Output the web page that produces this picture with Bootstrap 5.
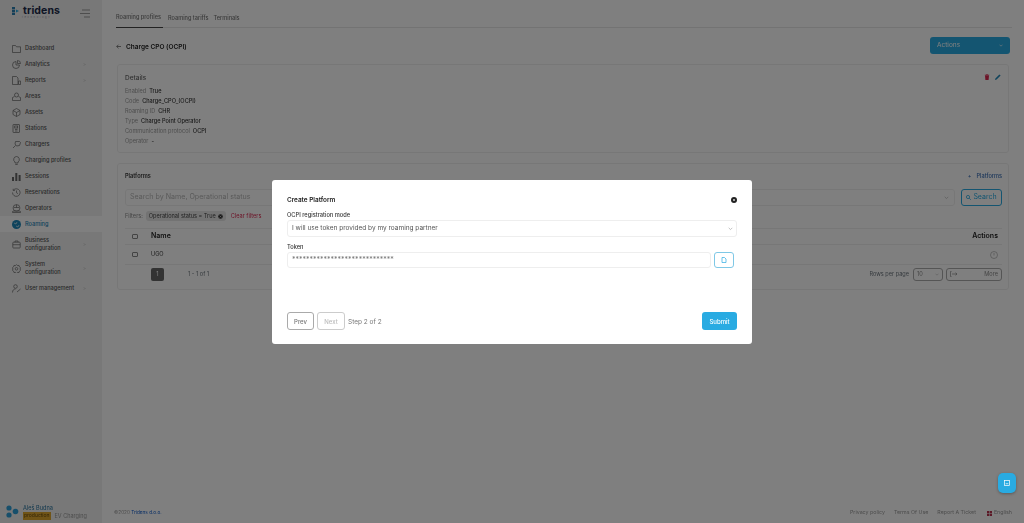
<!DOCTYPE html>
<html lang="en">
<head>
  <meta charset="UTF-8" />
  <meta name="viewport" content="width=device-width, initial-scale=1" />
  <title>Charge CPO (OCPI) - Tridens</title>
  <link href="https://cdn.jsdelivr.net/npm/bootstrap@5.3.3/dist/css/bootstrap.min.css" rel="stylesheet" />
  <style>
    html, body { height: 100%; overflow: hidden; }
    body { font-family: Inter, "Liberation Sans", sans-serif; font-size: 5.6px; color: #333; background: #fff; }
    body > * { filter: blur(.3px); }
    svg { display: block; flex: none; }

    /* sidebar */
    .side { width: 102px; height: 523px; background: #f0f0f0; flex: none; }
    .brand { height: 40px; padding: 6px 12px 0; }
    .brand-name { font-size: 10.5px; font-weight: 700; line-height: 10px; color: #1c2b4a; letter-spacing: .1px; }
    .brand-sub { font-size: 2.5px; letter-spacing: 1.6px; color: #99a; line-height: 4px; margin-left: 10px; }
    .burger { margin: 3px 0 0 auto; }
    .side-item { height: 16px; padding-left: 12px; padding-right: 16px; gap: 4px; color: #555; font-weight: 500; }
    .side-item.two-line { height: 24px; line-height: 8.5px; }
    .side-item.on { background: #fff; color: #1f86b8; }
    .caret-r { margin-left: auto; }
    .side-foot { margin-top: auto; padding: 0 0 3px 6px; gap: 4px; }
    .prod-tag { background: #e0a82e; color: #6b4d10; padding: 0 1px; font-size: 5px; }
    .side-name { color: #29749e; line-height: 8px; }
    .side-muted { color: #999; font-size: 5.5px; }

    /* main */
    .main-area { height: 523px; padding: 0 12px 0 14px; min-width: 0; }
    .tab-row { height: 28px; border-bottom: 1px solid #e7e7e7; gap: 5px; }
    .tab-link { padding-bottom: 6px; color: #777; height: 28px; display: flex; align-items: flex-end; font-weight: 500; white-space: nowrap; }
    .tab-link.on { border-bottom: 1px solid #444; width: 47px; }
    .title-row { height: 36px; gap: 5px; }
    .page-title { font-size: 6.5px; font-weight: 600; color: #222; line-height: 8px; margin-top: 1px; }
    .btn-actions { width: 80px; height: 17px; background: #29abe2; color: #fff; border-radius: 3px; padding: 0 7px; font-size: 6.5px; margin-right: 2px; margin-top: -1px; }
    .btn-actions span { margin-top: 1px; }
    .panel { border: 1px solid #efefef; border-radius: 3px; margin-left: 1px; margin-right: 3px; }
    .panel-details { height: 89px; padding: 7px 7px; }
    .panel-head { font-size: 6.5px; color: #666; font-weight: 500; line-height: 12px; }
    .panel-tools { gap: 5px; margin-top: 2px; }
    .detail-list { margin-top: 2px; }
    .detail-row { height: 10px; line-height: 10px; color: #999; gap: 3px; }
    .detail-row b { color: #333; font-weight: 500; }
    .panel-platforms { height: 127px; margin-top: 10px; padding: 6px 6px 0 7px; }
    .panel-sub { font-weight: 600; color: #333; line-height: 12px; }
    .link-plus { color: #3b6fb5; font-weight: 500; gap: 5px; }
    .search-row { margin-top: 7px; gap: 6px; }
    .search-box { height: 17px; border: 1px solid #efefef; border-radius: 3px; color: #b5b5b5; font-size: 7.1px; padding: 0 5px 0 4px; flex: 1; }
    .btn-find { width: 41px; height: 17px; border: 1px solid #29abe2; border-radius: 3px; color: #29abe2; font-size: 7px; gap: 2px; }
    .filter-row { height: 20px; gap: 3px; color: #888; }
    .filter-chip { background: #e6e6e6; border-radius: 3px; height: 10px; padding: 0 3px; color: #444; gap: 2px; }
    .clear-link { color: #d9274f; margin-left: 2px; }
    .grid-head { height: 17px; border-top: 1px solid #efefef; border-bottom: 1px solid #efefef; margin-top: 2px; }
    .grid-body { height: 20px; border-bottom: 1px solid #efefef; }
    .cell-check { width: 26px; padding-left: 7px; }
    .box-check { width: 5.5px; height: 5.5px; border: 1px solid #888; border-radius: 1px; }
    .col-head { font-size: 7px; font-weight: 600; color: #222; }
    .pager-row { height: 18px; }
    .page-num { width: 13px; height: 13px; background: #666; color: #fff; border-radius: 2px; margin-left: 26px; }
    .mini-select { height: 13px; border: 1px solid #aaa; border-radius: 3px; color: #888; padding: 0 3px; }
    .mini-rows { width: 30px; margin-right: 3px; }
    .mini-more { width: 56px; }
    .main-foot { margin-top: auto; height: 20px; color: #999; gap: 9px; margin-left: -2px; font-size: 5.3px; }
    .foot-copy { font-size: 4.7px; }
    .foot-lang { gap: 2px; margin-left: 2px; }

    /* fab */
    .fab { position: fixed; right: 8px; bottom: 30px; width: 18px; height: 20px; background: #29abe2; border-radius: 5px; z-index: 1060; box-shadow: 0 1px 3px rgba(0,0,0,.3); }

    /* modal */
    .modal-dialog.plat-dialog { width: 480px; max-width: 480px; margin: 180px 0 0 272px; }
    .plat-content { height: 164px; border: 0; border-radius: 3px; padding: 14px 15px 14px; font-size: 5.7px; }
    .plat-title { font-size: 6.4px; font-weight: 600; color: #222; line-height: 12px; }
    .close-dot { width: 6px; height: 6px; background: #222; border-radius: 50%; margin: 3px 0 0 0; color: #fff; }
    .plat-label { font-weight: 500; color: #333; height: 10px; line-height: 10px; margin-top: 4px; }
    .plat-label.next { margin-top: 5px; }
    .plat-input { height: 17px; border: 1px solid #eee; border-radius: 3px; color: #555; font-size: 6.5px; padding: 1px 3px 0 4px; }
    .plat-token { height: 16px; font-size: 7px; color: #777; flex: 1; }
    .plat-row { gap: 3px; margin-right: 3px; }
    .plat-copy { width: 20px; height: 16px; border: 1px solid #7fc8e6; border-radius: 3px; }
    .btn-step { height: 18px; width: 27px; border: 1px solid #aaa; border-radius: 3px; color: #777; font-size: 6px; font-weight: 500; background: #fff; margin-right: 3px; }
    .btn-step.off { border-color: #ccc; color: #bbb; width: 28px; }
    .step-text { color: #777; font-size: 6.5px; line-height: 8px; margin-top: 1px; }
    .btn-go { width: 35px; height: 18px; background: #29abe2; color: #fff; border-radius: 3px; font-size: 6px; font-weight: 500; }
    .modal-backdrop.show { opacity: .5; }
  </style>
</head>
<body>
  <div class="d-flex">
    <aside class="side d-flex flex-column">
      <div class="brand d-flex">
        <div>
          <div class="d-flex align-items-center gap-1">
            <svg width="7" height="8" viewBox="0 0 7 8"><rect x="0" y="0" width="3" height="2.4" fill="#2b7fb0"/><rect x="0" y="3" width="3" height="2.2" fill="#2b7fb0"/><rect x="0" y="5.7" width="3" height="2.3" fill="#2b7fb0"/><path d="M4 2.5l3 1.5-3 1.5z" fill="#29abe2"/></svg>
            <span class="brand-name">tridens</span>
          </div>
          <div class="brand-sub">technology</div>
        </div>
        <svg class="burger" width="10" height="9" viewBox="0 0 10 9" fill="none" stroke="#777" stroke-width=".7"><path d="M2 1h8M0 4.5h10M4 8h6"/></svg>
      </div>
      <div class="side-item d-flex align-items-center"><svg width="9" height="9" viewBox="0 0 9 9" fill="none" stroke="#666" stroke-width=".7"><path d="M.5 1.5h3l1 1.3h4v5.7H.5z"/></svg>Dashboard</div>
      <div class="side-item d-flex align-items-center"><svg width="9" height="9" viewBox="0 0 9 9" fill="none" stroke="#666" stroke-width=".7"><path d="M4 1.5a3.5 3.5 0 1 0 3.5 3.5H4zM5.5.5A3 3 0 0 1 8.5 3.5h-3z"/></svg>Analytics<svg class="caret-r" width="3" height="3" viewBox="0 0 3 3" fill="none" stroke="#999" stroke-width=".5"><path d="M1 .5l1 1-1 1"/></svg></div>
      <div class="side-item d-flex align-items-center"><svg width="9" height="9" viewBox="0 0 9 9" fill="none" stroke="#666" stroke-width=".7"><path d="M.5.5h4l1.5 1.5v6.5H.5zM6.5 5h2v3.5h-2z"/></svg>Reports<svg class="caret-r" width="3" height="3" viewBox="0 0 3 3" fill="none" stroke="#999" stroke-width=".5"><path d="M1 .5l1 1-1 1"/></svg></div>
      <div class="side-item d-flex align-items-center"><svg width="9" height="9" viewBox="0 0 9 9" fill="none" stroke="#666" stroke-width=".7"><circle cx="4.5" cy="3" r="2"/><path d="M.5 8.5v-3l2-1M8.5 8.5v-3l-2-1M.5 8.5h8"/></svg>Areas</div>
      <div class="side-item d-flex align-items-center"><svg width="9" height="9" viewBox="0 0 9 9" fill="none" stroke="#666" stroke-width=".7"><path d="M4.5.5l3.5 2v4l-3.5 2-3.5-2v-4zM1 2.5l3.5 2 3.5-2M4.5 4.5v4"/></svg>Assets</div>
      <div class="side-item d-flex align-items-center"><svg width="9" height="9" viewBox="0 0 9 9" fill="none" stroke="#666" stroke-width=".7"><rect x="1" y=".5" width="6.5" height="8" rx=".5"/><rect x="2.7" y="2" width="3" height="2"/><path d="M3 5.5h2.5M3 7h2.5"/></svg>Stations</div>
      <div class="side-item d-flex align-items-center"><svg width="9" height="9" viewBox="0 0 9 9" fill="none" stroke="#666" stroke-width=".7"><path d="M3.5 1.5l4 0 1 1-1 3-3 .5-1.5-2zM3.5 5.5l-2.5 2.5"/></svg>Chargers</div>
      <div class="side-item d-flex align-items-center"><svg width="9" height="9" viewBox="0 0 9 9" fill="none" stroke="#666" stroke-width=".7"><path d="M4.5.5a3 3 0 0 0-1.5 5.5v1h3V6A3 3 0 0 0 4.5.5zM3.3 8.5h2.4"/></svg>Charging profiles</div>
      <div class="side-item d-flex align-items-center"><svg width="9" height="9" viewBox="0 0 9 9" fill="#666"><rect x="0" y="5" width="2" height="4"/><rect x="3.3" y="1" width="2" height="8"/><rect x="6.6" y="3" width="2" height="6"/></svg>Sessions</div>
      <div class="side-item d-flex align-items-center"><svg width="9" height="9" viewBox="0 0 9 9" fill="none" stroke="#666" stroke-width=".7"><path d="M1.5 2a3.8 3.8 0 1 1-1 2.5M1.2.8V2.5h1.7M4.5 2.5v2.2l1.5 1"/></svg>Reservations</div>
      <div class="side-item d-flex align-items-center"><svg width="9" height="9" viewBox="0 0 9 9" fill="none" stroke="#666" stroke-width=".7"><circle cx="4.5" cy="4" r="3.4"/><path d="M2 3.5h5M4.5 .6v3M.5 7.5c1-1 7-1 8 0v1h-8z"/></svg>Operators</div>
      <div class="side-item on d-flex align-items-center"><svg width="9" height="9" viewBox="0 0 9 9"><circle cx="4.5" cy="4.5" r="4.5" fill="#1f86b8"/><path d="M2 3l2 1 1-2M4 6l2 1 1-2" fill="none" stroke="#fff" stroke-width=".6"/></svg>Roaming</div>
      <div class="side-item two-line d-flex align-items-center"><svg width="9" height="9" viewBox="0 0 9 9" fill="none" stroke="#666" stroke-width=".7"><rect x=".8" y="2.2" width="7.4" height="5.8" rx=".7"/><path d="M3 2.2V1h3v1.2M.8 4.7h7.4"/></svg><span>Business<br />configuration</span><svg class="caret-r" width="3" height="3" viewBox="0 0 3 3" fill="none" stroke="#999" stroke-width=".5"><path d="M1 .5l1 1-1 1"/></svg></div>
      <div class="side-item two-line d-flex align-items-center"><svg width="9" height="9" viewBox="0 0 9 9" fill="none" stroke="#666" stroke-width=".7"><path d="M4.5.6l1 1 1.5-.2.4 1.4 1.2.9-.6 1.3.6 1.3-1.2.9-.4 1.4-1.5-.2-1 1-1-1-1.5.2-.4-1.4L.4 6.3 1 5 .4 3.7l1.2-.9L2 1.4l1.5.2z"/><circle cx="4.5" cy="4.8" r="1.3"/></svg><span>System<br />configuration</span><svg class="caret-r" width="3" height="3" viewBox="0 0 3 3" fill="none" stroke="#999" stroke-width=".5"><path d="M1 .5l1 1-1 1"/></svg></div>
      <div class="side-item d-flex align-items-center"><svg width="9" height="9" viewBox="0 0 9 9" fill="none" stroke="#666" stroke-width=".7"><circle cx="3.5" cy="2.5" r="1.8"/><path d="M.5 8.5c0-2.5 1.5-3.5 3-3.5M5 8l3.5-3"/></svg>User management<svg class="caret-r" width="3" height="3" viewBox="0 0 3 3" fill="none" stroke="#999" stroke-width=".5"><path d="M1 .5l1 1-1 1"/></svg></div>
      <div class="side-foot d-flex align-items-center">
        <svg width="13" height="13" viewBox="0 0 13 13" fill="#2f9fd6"><circle cx="3" cy="3" r="2.6"/><circle cx="3" cy="10" r="2.6"/><circle cx="9.5" cy="6.5" r="2.8"/></svg>
        <div>
          <div class="side-name">Aleš Budna</div>
          <div class="d-flex align-items-center gap-1"><span class="prod-tag">production</span><span class="side-muted">EV Charging</span></div>
        </div>
      </div>
    </aside>

    <main class="main-area flex-grow-1 d-flex flex-column">
      <div class="tab-row d-flex">
        <span class="tab-link on">Roaming profiles</span>
        <span class="tab-link">Roaming tariffs</span>
        <span class="tab-link">Terminals</span>
      </div>
      <div class="title-row d-flex align-items-center">
        <svg width="5" height="5" viewBox="0 0 5 5" fill="none" stroke="#555" stroke-width=".7"><path d="M2.5.7L.7 2.5l1.8 1.8M.7 2.5H5"/></svg>
        <span class="page-title">Charge CPO (OCPI)</span>
        <div class="btn-actions d-flex align-items-center justify-content-between ms-auto"><span>Actions</span>
          <svg width="4" height="3" viewBox="0 0 4 3" fill="none" stroke="#fff" stroke-width=".6"><path d="M.5.7l1.5 1.5L3.5.7"/></svg>
        </div>
      </div>

      <section class="panel panel-details">
        <div class="d-flex justify-content-between">
          <div class="panel-head">Details</div>
          <div class="panel-tools d-flex">
            <svg width="6" height="6" viewBox="0 0 6 6" fill="#d9274f"><path d="M1 1.5h4L4.6 6H1.4zM.7.7h4.6v.5H.7zM2.2.2h1.6v.5H2.2z"/></svg>
            <svg width="6" height="6" viewBox="0 0 6 6" fill="#1f86b8"><path d="M0 6l.4-1.6L4.4.4l1.2 1.2-4 4z"/></svg>
          </div>
        </div>
        <div class="detail-list">
          <div class="detail-row d-flex">Enabled <b>True</b></div>
          <div class="detail-row d-flex">Code <b>Charge_CPO_(OCPI)</b></div>
          <div class="detail-row d-flex">Roaming ID <b>CHR</b></div>
          <div class="detail-row d-flex">Type <b>Charge Point Operator</b></div>
          <div class="detail-row d-flex">Communication protocol <b>OCPI</b></div>
          <div class="detail-row d-flex">Operator <b>-</b></div>
        </div>
      </section>

      <section class="panel panel-platforms">
        <div class="d-flex justify-content-between align-items-center">
          <div class="panel-sub">Platforms</div>
          <div class="link-plus d-flex"><span>+</span><span>Platforms</span></div>
        </div>
        <div class="search-row d-flex">
          <div class="search-box d-flex align-items-center justify-content-between">Search by Name, Operational status
            <svg width="5" height="4" viewBox="0 0 5 4" fill="none" stroke="#aaa" stroke-width=".6"><path d="M.7.8l1.8 1.8L4.3.8"/></svg>
          </div>
          <div class="btn-find d-flex align-items-center justify-content-center">
            <svg width="5" height="5" viewBox="0 0 5 5" fill="none" stroke="#29abe2" stroke-width=".8"><circle cx="2" cy="2" r="1.6"/><path d="M3.2 3.2L4.8 4.8"/></svg>Search
          </div>
        </div>
        <div class="filter-row d-flex align-items-center">Filters:
          <span class="filter-chip d-flex align-items-center">Operational status = True
            <svg width="5" height="5" viewBox="0 0 5 5"><circle cx="2.5" cy="2.5" r="2.3" fill="#333"/><path d="M1.6 1.6l1.8 1.8M3.4 1.6L1.6 3.4" stroke="#eee" stroke-width=".5"/></svg>
          </span>
          <span class="clear-link">Clear filters</span>
        </div>
        <div class="grid-head d-flex align-items-center">
          <div class="cell-check"><div class="box-check"></div></div>
          <div class="col-head">Name</div>
          <div class="col-head ms-auto pe-1">Actions</div>
        </div>
        <div class="grid-body d-flex align-items-center">
          <div class="cell-check"><div class="box-check"></div></div>
          <div>UGO</div>
          <svg class="ms-auto me-1" width="8" height="8" viewBox="0 0 8 8" fill="none" stroke="#999" stroke-width=".6"><circle cx="4" cy="4" r="3.5"/><path d="M4 2v2.5"/></svg>
        </div>
        <div class="pager-row d-flex align-items-center">
          <div class="page-num d-flex align-items-center justify-content-center">1</div>
          <span class="ms-4 text-secondary">1 - 1 of 1</span>
          <span class="ms-auto text-secondary me-1">Rows per page</span>
          <div class="mini-select mini-rows d-flex align-items-center justify-content-between">10
            <svg width="4" height="3" viewBox="0 0 4 3" fill="none" stroke="#aaa" stroke-width=".5"><path d="M.5.7l1.5 1.5L3.5.7"/></svg>
          </div>
          <div class="mini-select mini-more d-flex align-items-center justify-content-between">
            <svg width="7" height="6" viewBox="0 0 7 6" fill="none" stroke="#777" stroke-width=".6"><path d="M1.5.5H.5v5h1M2 3h5M5.5 1.7L7 3 5.5 4.3"/></svg>More
          </div>
        </div>
      </section>

      <footer class="main-foot d-flex align-items-center">
        <span class="foot-copy">©2020 <span class="text-primary-emphasis">Tridens d.o.o.</span></span>
        <span class="ms-auto">Privacy policy</span>
        <span>Terms Of Use</span>
        <span>Report A Ticket</span>
        <span class="foot-lang d-flex align-items-center"><svg width="5" height="5" viewBox="0 0 5 5"><rect width="5" height="5" fill="#b8324f"/><path d="M0 2.5h5M2.5 0v5" stroke="#eee" stroke-width=".6"/></svg>English</span>
      </footer>
    </main>
  </div>

  <div class="modal-backdrop show"></div>
  <div class="modal d-block" tabindex="-1">
    <div class="modal-dialog plat-dialog">
      <div class="modal-content plat-content">
        <div class="d-flex justify-content-between">
          <div class="plat-title">Create Platform</div>
          <div class="close-dot d-flex align-items-center justify-content-center">
            <svg width="4" height="4" viewBox="0 0 4 4" stroke="#fff" stroke-width=".6"><path d="M1 1l2 2M3 1L1 3"/></svg>
          </div>
        </div>
        <div class="plat-label">OCPI registration mode</div>
        <div class="plat-input d-flex align-items-center justify-content-between">I will use token provided by my roaming partner
          <svg width="5" height="4" viewBox="0 0 5 4" fill="none" stroke="#999" stroke-width=".6"><path d="M.7.8l1.8 1.8L4.3.8"/></svg>
        </div>
        <div class="plat-label next">Token</div>
        <div class="plat-row d-flex align-items-center">
          <div class="plat-input plat-token d-flex align-items-center">*****************************</div>
          <div class="plat-copy d-flex align-items-center justify-content-center">
            <svg width="6" height="6" viewBox="0 0 6 6" fill="none" stroke="#29abe2" stroke-width=".7"><path d="M1 .5h2.5L5 2v3.5H1z"/></svg>
          </div>
        </div>
        <div class="d-flex align-items-center mt-auto">
          <div class="btn-step d-flex align-items-center justify-content-center">Prev</div>
          <div class="btn-step off d-flex align-items-center justify-content-center">Next</div>
          <span class="step-text">Step 2 of 2</span>
          <div class="btn-go d-flex align-items-center justify-content-center ms-auto">Submit</div>
        </div>
      </div>
    </div>
  </div>

  <div class="fab d-flex align-items-center justify-content-center">
    <svg width="6" height="6" viewBox="0 0 6 6" fill="none" stroke="#fff" stroke-width=".7"><rect x=".5" y=".5" width="5" height="5"/><path d="M1.7 3.7h2.6"/></svg>
  </div>

  <script src="https://cdn.jsdelivr.net/npm/bootstrap@5.3.3/dist/js/bootstrap.bundle.min.js"></script>
</body>
</html>
